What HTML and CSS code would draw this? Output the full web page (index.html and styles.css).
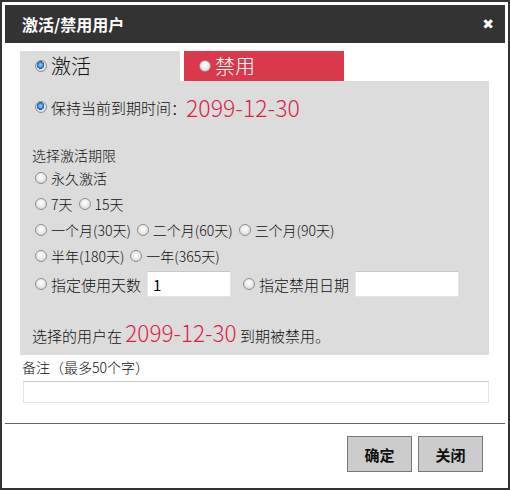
FILE: index.html
```html
<!DOCTYPE html>
<html lang="zh-CN">
  <head>
    <meta charset="UTF-8" />
    <title>激活/禁用用户</title>
    <link rel="stylesheet" href="styles.css">
  </head>
  <body>
    <div class="dialog">
      <!-- Header -->
      <div class="dialog-header">
        <span class="dialog-title">激活/禁用用户</span>
        <span class="dialog-close">&#x2716;</span>
      </div>

      <div class="dialog-body">
        <!-- Tabs -->
        <div class="tabs">
          <label class="tab tab-active"><input type="radio" name="mode" checked>激活</label>
          <label class="tab tab-ban"><input type="radio" name="mode">禁用</label>
        </div>

        <!-- Panel -->
        <div class="panel">
          <div class="row row-keep">
            <label><input type="radio" name="period" checked>保持当前到期时间：</label>
            <span class="date">2099-12-30</span>
          </div>

          <div class="section-title">选择激活期限</div>
          <div class="options">
            <div class="row"><label><input type="radio" name="period">永久激活</label></div>
            <div class="row">
              <label><input type="radio" name="period">7天</label>
              <label><input type="radio" name="period">15天</label>
            </div>
            <div class="row">
              <label><input type="radio" name="period">一个月(30天)</label>
              <label><input type="radio" name="period">二个月(60天)</label>
              <label><input type="radio" name="period">三个月(90天)</label>
            </div>
            <div class="row">
              <label><input type="radio" name="period">半年(180天)</label>
              <label><input type="radio" name="period">一年(365天)</label>
            </div>
            <div class="row row-custom">
              <label><input type="radio" name="period">指定使用天数</label>
              <input type="text" class="field field-days" value="1">
              <label><input type="radio" name="period">指定禁用日期</label>
              <input type="text" class="field field-date">
            </div>
          </div>

          <div class="summary">
            选择的用户在 <span class="date">2099-12-30</span> 到期被禁用。
          </div>
        </div>

        <!-- Remark -->
        <div class="remark-label">备注（最多50个字）</div>
        <input type="text" class="field field-remark">
      </div>

      <!-- Footer -->
      <div class="dialog-footer">
        <button class="btn">确定</button>
        <button class="btn">关闭</button>
      </div>
    </div>
  </body>
</html>
```

FILE: styles.css
```css
/* Global Styles */
body {
  margin: 0;
  font-family: "Noto Sans CJK SC", "Open Sans", sans-serif;
  font-size: 14px;
  font-weight: 300;
  color: #111;
  background-color: #fff;
}

.dialog {
  width: 510px;
  height: 490px;
  box-sizing: border-box;
  border: 2px solid #333;
  padding: 3px;
  display: flex;
  flex-direction: column;
}

/* Header */
.dialog-header {
  height: 38px;
  background-color: #333;
  color: #fff;
  display: flex;
  align-items: center;
  justify-content: space-between;
  padding: 0 11px 0 17px;
}

.dialog-title {
  font-size: 16px;
  font-weight: bold;
}

.dialog-close {
  font-size: 14px;
  font-weight: bold;
  font-family: "DejaVu Sans", sans-serif;
}

/* Body */
.dialog-body {
  padding: 8px 16px 0 15px;
}

.tabs {
  display: flex;
  gap: 4px;
}

.tab {
  width: 160px;
  height: 30px;
  display: flex;
  align-items: center;
  box-sizing: border-box;
  padding-left: 14px;
  font-size: 20px;
  line-height: 30px;
}

.tab-active {
  background-color: #dcdcdc;
  color: #111;
}

.tab-ban {
  background-color: #d9394a;
  color: #fff;
}

/* Radio buttons */
input[type="radio"] {
  appearance: none;
  -webkit-appearance: none;
  width: 12px;
  height: 12px;
  margin: 0 4px 0 1px;
  border: 1px solid #8e8f8f;
  border-radius: 50%;
  box-sizing: border-box;
  background: radial-gradient(circle at 50% 40%, #ffffff 0%, #e8e8e8 55%, #c4c4c4 100%);
  flex-shrink: 0;
}

input[type="radio"]:checked {
  background:
    radial-gradient(circle at 45% 40%, #9fd4ff 0%, #3d8fd6 30%, #17518e 45%, transparent 50%),
    radial-gradient(circle at 50% 40%, #ffffff 0%, #e8e8e8 55%, #c4c4c4 100%);
}

label {
  display: inline-flex;
  align-items: center;
}

/* Panel */
.panel {
  background-color: #dcdcdc;
  padding: 12px 12px 8px 14px;
}

.row {
  display: flex;
  align-items: center;
  gap: 5px;
  height: 24px;
}

.row-keep {
  height: 28px;
  gap: 0;
}

.row-keep label {
  font-size: 15px;
}

.date {
  color: #dc1f4a;
  font-size: 23px;
}

.section-title {
  margin: 23px 0 0 -2px;
  height: 22px;
  line-height: 22px;
}

.options {
  display: flex;
  flex-direction: column;
  gap: 2px;
}

.row-custom {
  height: 28px;
  gap: 0;
}

.row-custom label {
  font-size: 15px;
}

.field {
  height: 26px;
  box-sizing: border-box;
  border: 1px solid #e4e4e4;
  border-top-color: #c8c8c8;
  background-color: #fff;
  font-family: inherit;
  font-size: 15px;
  padding: 0 5px;
  outline: none;
}

.field-days {
  width: 84px;
  margin: 0 11px 0 6px;
}

.field-date {
  width: 104px;
  margin-left: 6px;
}

.summary {
  margin: 19px 0 0 -2px;
  height: 30px;
  line-height: 30px;
  font-size: 15px;
}

.summary .date {
  font-size: 22.5px;
}

/* Remark */
.remark-label {
  margin-top: 2px;
  height: 20px;
  line-height: 20px;
  padding-left: 2px;
}

.field-remark {
  display: block;
  width: 466px;
  height: 22px;
  margin: 4px 0 0 3px;
}

/* Footer */
.dialog-footer {
  margin-top: 20px;
  border-top: 1px solid #666;
  display: flex;
  justify-content: flex-end;
  gap: 6px;
  padding: 12px 22px 0 0;
}

.btn {
  width: 65px;
  height: 36px;
  background-color: #cccccc;
  border: 1px solid #777;
  font-family: inherit;
  font-size: 15px;
  font-weight: bold;
  color: #111;
  cursor: pointer;
}

.btn:hover {
  background-color: #bbb;
}
```
